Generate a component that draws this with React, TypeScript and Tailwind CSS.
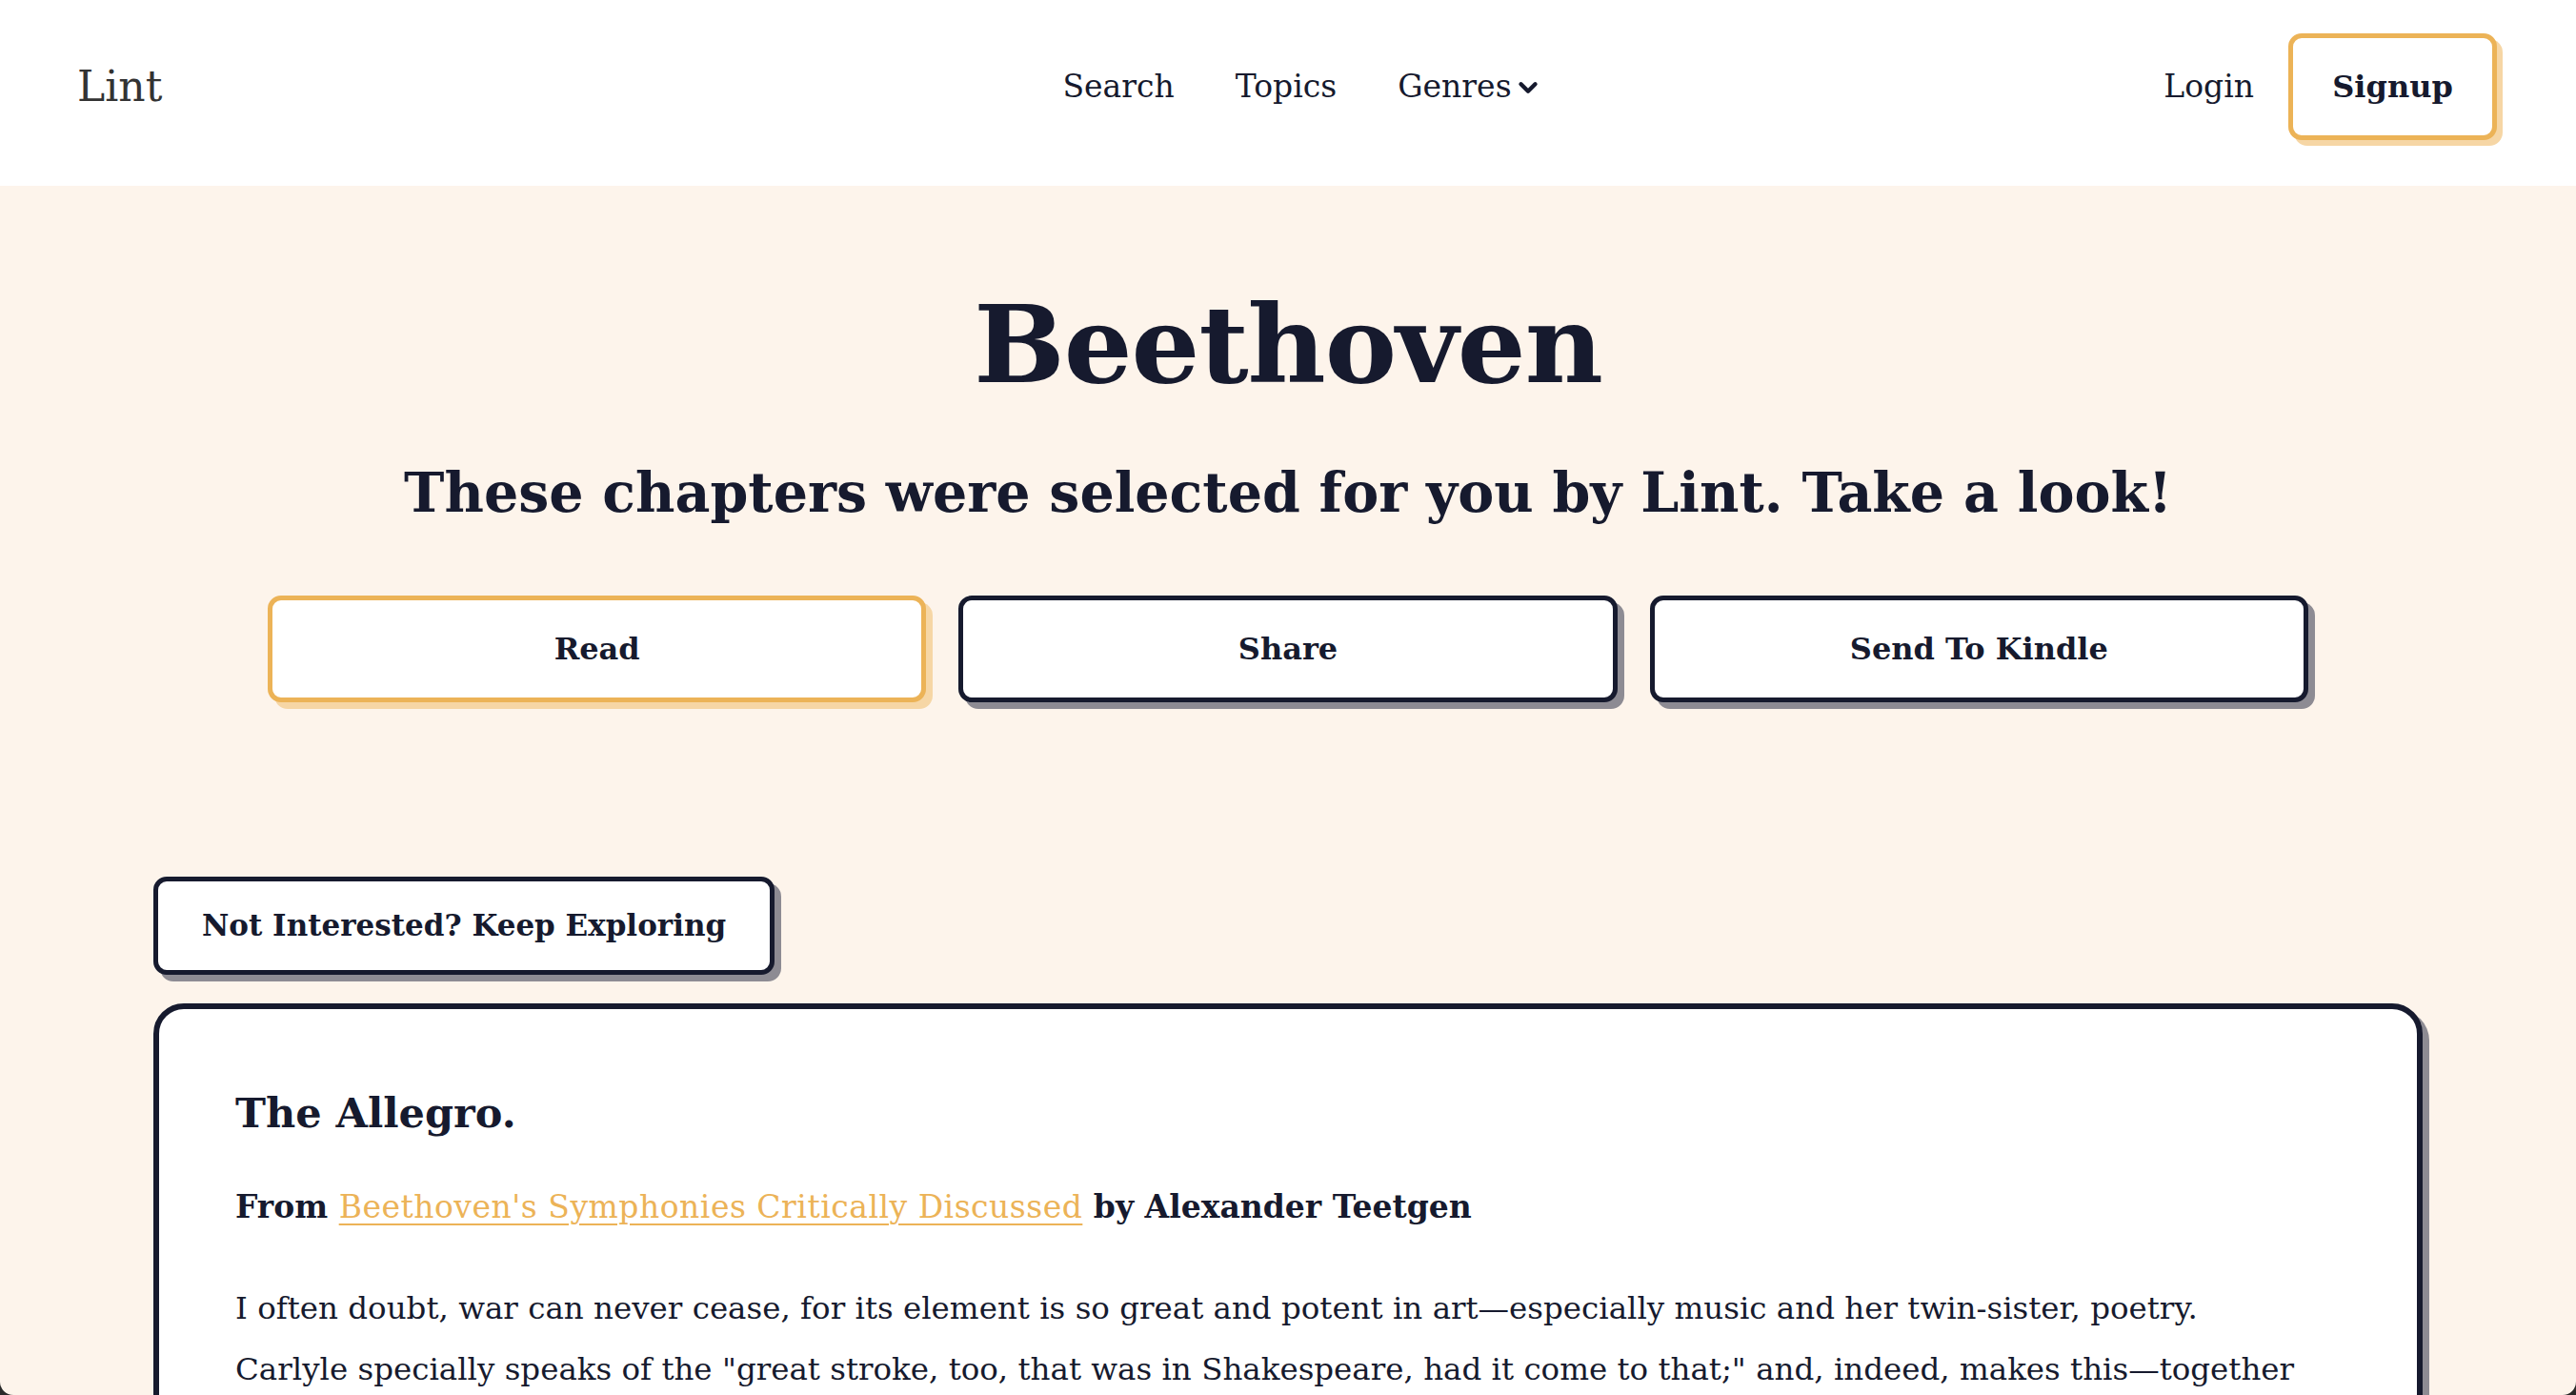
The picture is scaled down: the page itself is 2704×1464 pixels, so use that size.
import React from "react";
import { ChevronDown } from "lucide-react";

const serif = { fontFamily: '"DejaVu Serif", "Liberation Serif", serif' };

export default function App() {
  return (
    <div className="h-[1464px] w-full overflow-hidden bg-[#2a2a2a]" style={serif}>
      <div className="flex h-full flex-col overflow-hidden rounded-b-[14px] bg-[#fdf4eb] text-[#161a2e]">
        {/* Nav */}
        <header className="flex h-[195px] shrink-0 items-center bg-white px-[81px] pb-[14px]">
          <div className="flex-1">
            <span className="text-[44px] leading-none text-[#333333]">Lint</span>
          </div>
          <nav className="ml-[32px] flex items-center gap-[64px] text-[33px] leading-none">
            <span>Search</span>
            <span>Topics</span>
            <span className="flex items-center">
              Genres
              <ChevronDown size={30} strokeWidth={3.5} className="ml-[2px] mt-[2px]" />
            </span>
          </nav>
          <div className="flex flex-1 items-center justify-end gap-[36px] pr-[2px]">
            <span className="text-[33px] leading-none">Login</span>
            <button className="flex h-[112px] w-[219px] items-center justify-center rounded-[14px] border-[5px] border-[#ecb357] bg-white text-[32px] font-bold shadow-[6px_6px_0_#f6d6a5]">
              Signup
            </button>
          </div>
        </header>

        {/* Hero */}
        <main className="flex flex-col items-center">
          <h1 className="mt-[110px] text-[113px] font-bold leading-none tracking-[-1px]">Beethoven</h1>
          <p className="mt-[70px] text-[57px] font-bold leading-none">
            These chapters were selected for you by Lint. Take a look!
          </p>
          <div className="mt-[80px] grid w-[2142px] grid-cols-3 gap-[34px]">
            <button className="flex h-[112px] items-center justify-center rounded-[14px] border-[5px] border-[#ecb357] bg-white text-[32px] font-bold shadow-[7px_7px_0_#f6d6a5]">
              Read
            </button>
            <button className="flex h-[112px] items-center justify-center rounded-[14px] border-[5px] border-[#161a2e] bg-white text-[32px] font-bold shadow-[7px_7px_0_#8d8b93]">
              Share
            </button>
            <button className="flex h-[112px] items-center justify-center rounded-[14px] border-[5px] border-[#161a2e] bg-white text-[32px] font-bold shadow-[7px_7px_0_#8d8b93]">
              Send To Kindle
            </button>
          </div>

          <div className="mt-[183px] flex w-[2382px] flex-col items-start">
            <button className="flex h-[103px] items-center rounded-[14px] border-[5px] border-[#161a2e] bg-white px-[46px] text-[31px] font-bold shadow-[7px_7px_0_#8d8b93]">
              Not Interested? Keep Exploring
            </button>
            <article className="mt-[30px] w-full rounded-[32px] border-[6px] border-[#161a2e] bg-white px-[80px] pb-[80px] pt-[88px] shadow-[7px_7px_0_#8d8b93]">
              <h2 className="text-[43px] font-bold leading-none">The Allegro.</h2>
              <p className="mt-[60px] text-[33px] font-bold leading-none">
                From{" "}
                <a className="font-normal tracking-[0.5px] text-[#ecb357] underline underline-offset-[6px] decoration-[2px]">
                  Beethoven's Symphonies Critically Discussed
                </a>{" "}
                by Alexander Teetgen
              </p>
              <p className="mt-[58px] text-[32.5px] leading-[64px]">
                I often doubt, war can never cease, for its element is so great and potent in art—especially music and her twin-sister, poetry.
                <br />
                Carlyle specially speaks of the "great stroke, too, that was in Shakespeare, had it come to that;" and, indeed, makes this—together with the heroic and the martial in all ages—the very centre of the poet's strength and the measure of his greatness.
              </p>
            </article>
          </div>
        </main>
      </div>
    </div>
  );
}
